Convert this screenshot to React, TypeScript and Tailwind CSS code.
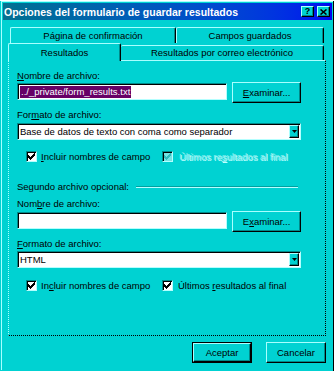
import React from 'react';

const raised =
  'border border-t-[#a8ffff] border-l-[#a8ffff] border-r-black border-b-black shadow-[inset_-1px_-1px_0_#008a8a]';
const sunken =
  'border border-t-[#008a8a] border-l-[#008a8a] border-r-[#b4ffff] border-b-[#b4ffff] shadow-[inset_1px_1px_0_#000]';
const tab =
  'flex items-center justify-center rounded-t-[2px] border-t border-l border-r border-t-[#a8ffff] border-l-[#a8ffff] border-r-black shadow-[inset_-1px_0_0_#008a8a]';

const CheckMark = ({ color }: { color: string }) => (
  <svg width="7" height="7" viewBox="0 0 7 7" shapeRendering="crispEdges">
    <path
      fill={color}
      d="M6 0h1v1H6z M5 1h2v1H5z M0 2h1v1H0z M4 2h3v1H4z M0 3h2v1H0z M3 3h3v1H3z M0 4h5v1H0z M1 5h3v1H1z M2 6h1v1H2z"
    />
  </svg>
);

const CheckBox = ({ disabled = false }: { disabled?: boolean }) => (
  <div
    className={`w-[11px] h-[11px] flex items-center justify-center ${sunken} ${
      disabled ? 'bg-[#74e4e4]' : 'bg-white'
    }`}
  >
    <CheckMark color={disabled ? '#30bcbc' : '#000'} />
  </div>
);

const TextField = ({ children }: { children?: React.ReactNode }) => (
  <div className={`w-[211px] h-[17px] mt-px bg-white flex items-center pl-[2px] ${sunken}`}>{children}</div>
);

const Btn = ({ children, className = '' }: { children: React.ReactNode; className?: string }) => (
  <button type="button" className={`flex items-center justify-center bg-[#00d2d2] ${raised} ${className}`}>
    {children}
  </button>
);

const Select = ({ value }: { value: string }) => (
  <div className={`w-[284px] h-[17px] bg-white flex items-stretch ${sunken}`}>
    <div className="flex-1 flex items-center pl-[2px]">{value}</div>
    <div className={`w-[10px] mt-px mb-px mr-px flex items-center justify-center bg-[#00d2d2] ${raised}`}>
      <svg width="5" height="3" viewBox="0 0 5 3">
        <path d="M0 0h5L2.5 3z" fill="#000" />
      </svg>
    </div>
  </div>
);

export default function App() {
  return (
    <div className="w-[334px] h-[371px] bg-[#00d2d2] border-r border-b border-black font-['Liberation_Sans',Arial,sans-serif] text-[9.5px] leading-[12px] text-black">
      <div className="h-[369px] ml-px mt-px border-l border-t border-[#a8ffff]">
        {/* title bar */}
        <div className="mx-px mt-px h-[17px] flex items-center justify-between pl-px pr-[2px] bg-linear-to-r from-[#0a7090] to-[#0000f0]">
          <span className="text-white font-bold text-[10.5px]">Opciones del formulario de guardar resultados</span>
          <div className="flex gap-[3px]">
            <div className={`w-[13px] h-[11px] flex items-center justify-center bg-[#00d2d2] ${raised}`}>
              <span className="font-bold text-[9px] leading-[9px]">?</span>
            </div>
            <div className={`w-[13px] h-[11px] flex items-center justify-center bg-[#00d2d2] ${raised}`}>
              <svg width="7" height="6" viewBox="0 0 7 6">
                <path d="M0.5 0.5L6.5 5.5M6.5 0.5L0.5 5.5" stroke="#000" strokeWidth="1.6" />
              </svg>
            </div>
          </div>
        </div>

        <div className="pl-[6px] pr-[7px]">
          {/* back tab row */}
          <div className="mt-[7px] ml-[2px] flex h-[16px]">
            <div className={`w-[166px] ${tab}`}>Página de confirmación</div>
            <div className={`w-[148px] ${tab}`}>Campos guardados</div>
          </div>
          {/* front tab row */}
          <div className="flex items-end h-[17px]">
            <div className={`relative z-10 w-[113px] h-[18px] -mb-px bg-[#00d2d2] ${tab}`}>Resultados</div>
            <div className={`w-[203px] h-[15px] ${tab} border-l-0`}>Resultados por correo electrónico</div>
          </div>

          {/* panel */}
          <div className="h-[276px] border border-t-[#a8ffff] border-l-[#a8ffff] border-r-black border-b-black [border-left-style:dotted] [border-right-style:dotted] [border-bottom-style:dotted]">
            <div className="ml-[8px] w-[284px]">
              <div className="mt-[9px]">
                <u>N</u>ombre de archivo:
              </div>
              <div className="flex items-start gap-[5px]">
                <TextField>
                  <span className="bg-[#660066] text-white px-px leading-[12px]">../_private/form_results.txt</span>
                </TextField>
                <Btn className="w-[69px] h-[21px]">
                  <span>
                    <u>E</u>xaminar...
                  </span>
                </Btn>
              </div>
              <div className="mt-[6px]">
                For<u>m</u>ato de archivo:
              </div>
              <div className="mt-[2px]">
                <Select value="Base de datos de texto con coma como separador" />
              </div>
              <div className="mt-[10px] h-[13px] flex items-center pl-[9px]">
                <div className="w-[136px] flex items-center gap-[4px]">
                  <CheckBox />
                  <span>
                    <u>I</u>ncluir nombres de campo
                  </span>
                </div>
                <div className="flex items-center gap-[6px]">
                  <CheckBox disabled />
                  <span className="text-[#86eeee] [text-shadow:1px_1px_0_#c0ffff]">
                    Últimos re<u>s</u>ultados al final
                  </span>
                </div>
              </div>

              <div className="mt-[18px] h-[12px] flex items-center">
                <span>Segundo archivo opcional:</span>
                <div className="flex-1 ml-[7px] mr-[3px] border-t border-b border-t-[#00a0a0] border-b-[#b4ffff]" />
              </div>
              <div className="mt-[5px]">
                Nom<u>b</u>re de archivo:
              </div>
              <div className="mt-px flex items-start gap-[5px]">
                <TextField />
                <Btn className="w-[69px] h-[21px]">
                  <span>
                    E<u>x</u>aminar...
                  </span>
                </Btn>
              </div>
              <div className="mt-[6px]">
                <u>F</u>ormato de archivo:
              </div>
              <div className="mt-px">
                <Select value="HTML" />
              </div>
              <div className="mt-[11px] h-[13px] flex items-center pl-[9px]">
                <div className="w-[136px] flex items-center gap-[4px]">
                  <CheckBox />
                  <span>
                    In<u>c</u>luir nombres de campo
                  </span>
                </div>
                <div className="flex items-center gap-[5px]">
                  <CheckBox />
                  <span>
                    Últimos <u>r</u>esultados al final
                  </span>
                </div>
              </div>
            </div>
          </div>

          {/* dialog buttons */}
          <div className="mt-[6px] flex justify-end gap-[14px]">
            <div className="border border-black">
              <Btn className="w-[58px] h-[19px]">Aceptar</Btn>
            </div>
            <Btn className="w-[60px] h-[21px]">Cancelar</Btn>
          </div>
        </div>
      </div>
    </div>
  );
}
